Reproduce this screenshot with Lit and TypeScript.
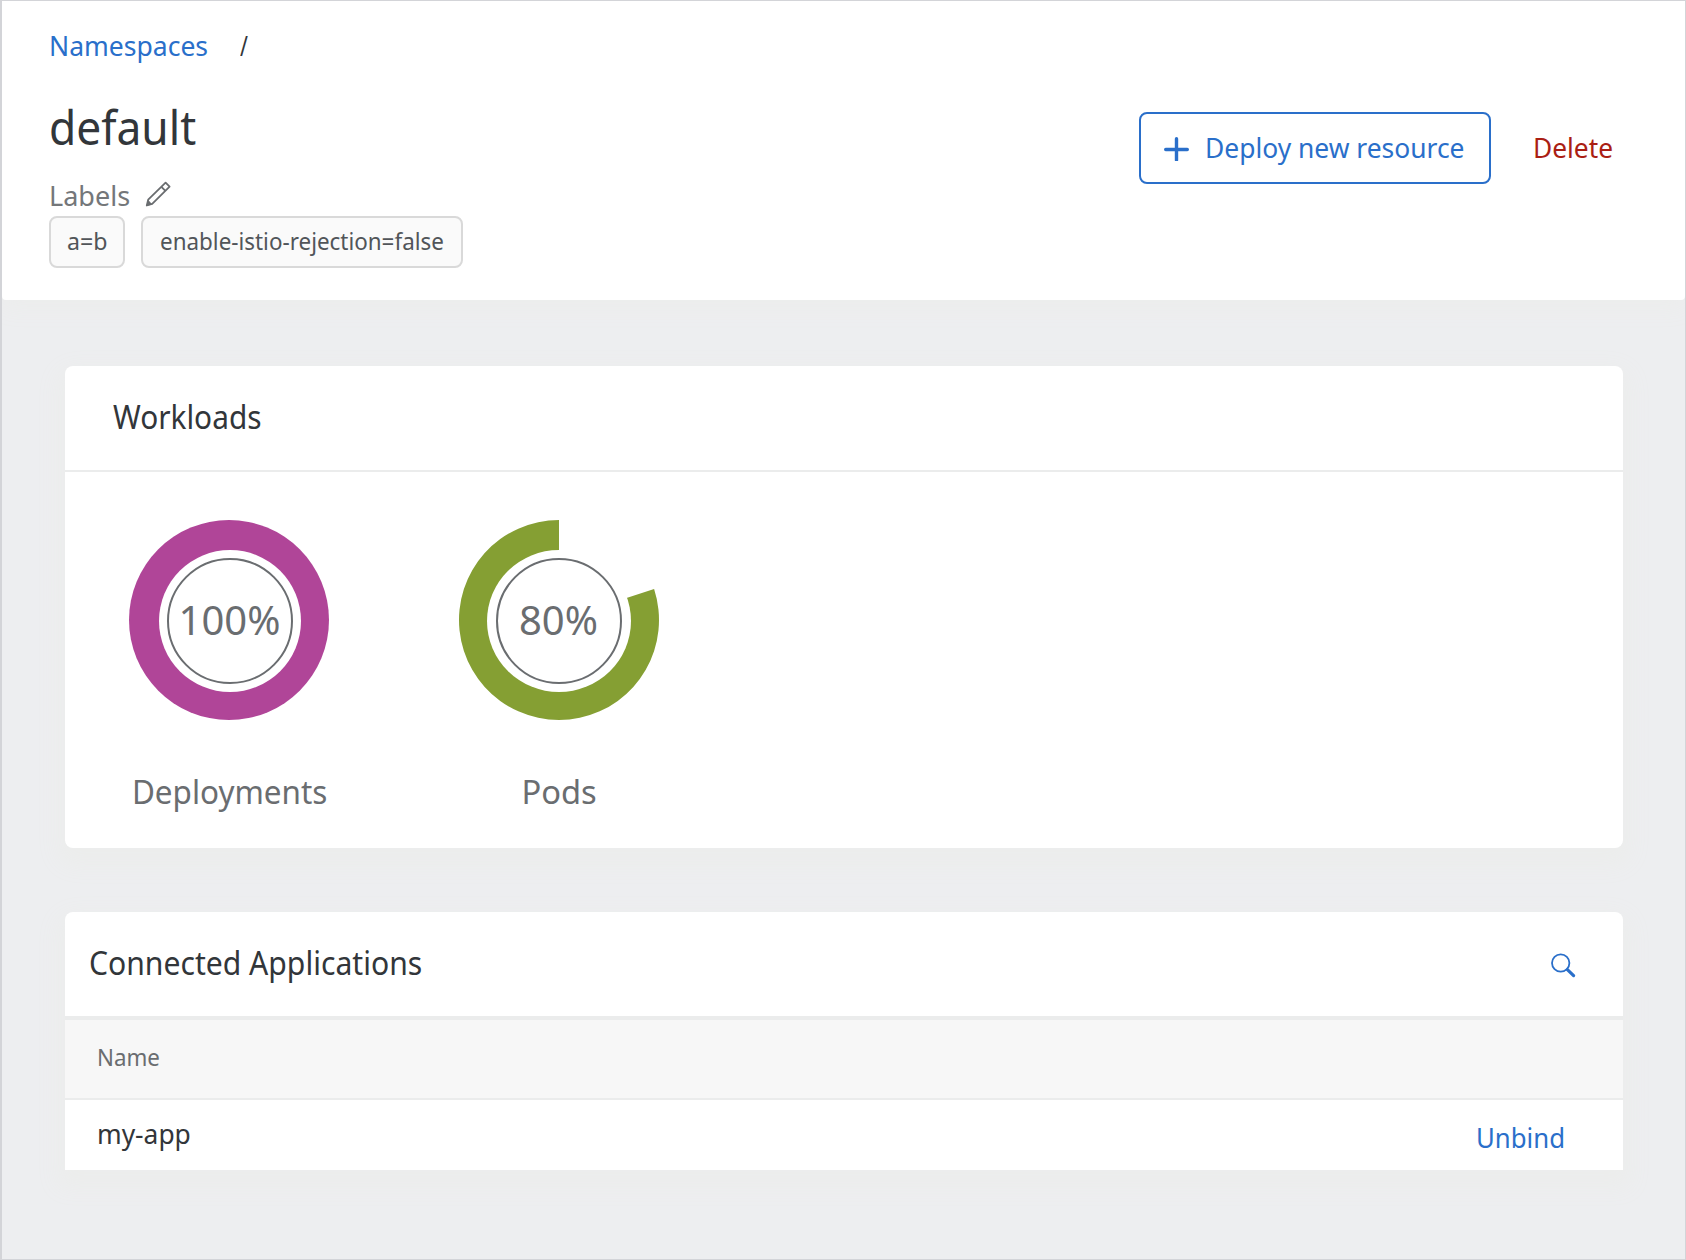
import { LitElement, html, css, svg } from "lit";
import { customElement, property } from "lit/decorators.js";

@customElement("workload-ring")
export class WorkloadRing extends LitElement {
  @property({ type: Number }) percent = 100;
  @property() color = "#b04598";
  @property({ type: Number }) shift = 0;
  @property({ type: Number }) inner = 71;

  static styles = css`
    :host { display: block; width: 200px; height: 200px; }
    svg { display: block; overflow: visible; }
    .value { font: 40px "Noto Sans", sans-serif; fill: #6a6d70; }
  `;

  private sector() {
    if (this.percent >= 100) return svg`<circle cx="100" cy="100" r="100" fill=${this.color} />`;
    const a = (1 - this.percent / 100) * 2 * Math.PI;
    const x = 100 + 100 * Math.sin(a);
    const y = 100 - 100 * Math.cos(a);
    return svg`<path d="M100 100L${x} ${y}A100 100 0 ${this.percent > 50 ? 1 : 0} 1 100 0Z" fill=${this.color} />`;
  }

  render() {
    const cx = 100 + this.shift;
    return html`<svg width="200" height="200" viewBox="0 0 200 200">
      ${this.sector()}
      <ellipse cx=${cx} cy="101" rx=${this.inner} ry="71" fill="#fff" />
      <circle cx=${cx} cy="101" r="62" fill="none" stroke="#6a6d70" stroke-width="2" />
      <text class="value" x=${cx - 0.5} y="115" text-anchor="middle">${this.percent}%</text>
    </svg>`;
  }
}

@customElement("app-root")
export class AppRoot extends LitElement {
  static styles = css`
    :host { display: block; }
    * { box-sizing: border-box; }
    .page {
      width: 1686px; height: 1260px; background: #edeef0; overflow: hidden;
      border: 1px solid #d3d4d8; border-left-width: 2px;
      font: 28px/36px "Noto Sans", sans-serif; color: #32363a; white-space: nowrap;
      display: flex; flex-direction: column;
    }
    .t { display: block; transform-origin: 0 50%; }
    .header {
      height: 299px; background: #fff; border-radius: 0 0 4px 4px; flex: none;
      padding: 24px 70px 0 47px; display: flex; justify-content: space-between;
      box-shadow: 0 4px 24px 4px #ecedec;
    }
    .crumbs { display: flex; line-height: 40px; }
    .crumb { color: #2a6fca; transform: scaleX(0.947); width: 191px; }
    .slash { transform: scaleX(0.76); }
    .title { font-size: 47px; font-weight: 400; line-height: 60px; margin: 32px 0 20px; transform: scaleX(0.943); }
    .labels { display: flex; color: #74777a; }
    .labels-name { transform: scaleX(0.965); width: 96px; }
    .pencil { margin-top: 4px; }
    .chips { display: flex; gap: 16px; margin-top: 3px; }
    .chip {
      height: 52px; border: 2px solid #d9d9d9; border-radius: 8px; background: #fafafa;
      font-size: 24px; line-height: 46px; color: #515559; padding-left: 16px;
    }
    .short { width: 76px; }
    .short .t { transform: scaleX(0.965); }
    .long { width: 322px; padding-left: 17px; }
    .long .t { transform: scaleX(0.934); }
    .actions { display: flex; align-items: center; height: 72px; margin-top: 87px; }
    .deploy {
      width: 352px; height: 72px; border: 2px solid #2a6fca; border-radius: 8px; color: #2a6fca;
      display: flex; align-items: center; padding: 0 0 0 23px;
    }
    .deploy .t { margin: -2px 0 0 16px; transform: scaleX(0.943); }
    .delete { color: #aa1e14; margin: -2px 0 0 41.5px; width: 82.5px; transform: scaleX(0.94); }
    .body { padding: 66px 62px 0 63px; display: flex; flex-direction: column; gap: 64px; }
    .card { background: #fff; border-radius: 8px; box-shadow: 0 10px 22px 8px #ecedec; }
    .square { border-radius: 8px 8px 0 0; }
    .bar { height: 106px; border-bottom: 2px solid #ebecec; padding: 27px 0 0 48px; font-size: 32px; line-height: 48px; }
    .bar .t { transform: scaleX(0.932); }
    .rings { height: 376px; padding: 48px 0 0 64px; display: flex; gap: 130px; }
    .workload { width: 200px; display: flex; flex-direction: column; align-items: center; gap: 48px; }
    .caption { font-size: 33px; line-height: 48px; color: #6a6d70; transform: translateX(1px) scaleX(0.952); }
    .caption.pods { transform: scaleX(0.99); }
    .bar.apps { height: 108px; border-bottom-width: 4px; padding: 27px 44px 0 24px; display: flex; justify-content: space-between; }
    .bar.apps .t { transform: scaleX(0.941); }
    .search { margin-top: 12px; }
    .thead { height: 80px; background: #f7f7f7; border-bottom: 2px solid #ebecec; padding: 19px 0 0 32px; font-size: 24px; color: #6a6d70; }
    .thead .t { transform: scaleX(0.93); }
    .row { height: 70px; padding: 15px 54px 0 32px; display: flex; justify-content: space-between; }
    .app { transform: scaleX(0.942); }
    .unbind { color: #2a6fca; margin-top: 4px; width: 93px; transform: scaleX(0.92); }
  `;

  render() {
    return html`<div class="page">
      <header class="header">
        <div>
          <nav class="crumbs"><a class="t crumb">Namespaces</a><span class="t slash">/</span></nav>
          <h1 class="t title">default</h1>
          <div class="labels">
            <span class="t labels-name">Labels</span>
            <svg class="pencil" width="26" height="26" viewBox="0 0 26 26" fill="none" stroke="#6a6d70" stroke-width="1.8" stroke-linejoin="round">
              <path d="M1.8 24.4L3.2 18.6L20.6 1.6L24.6 5.6L7.2 22.8Z" />
              <path d="M16.4 5.8L20.4 9.8" />
              <path d="M1.2 25.2L3 18.8L7.2 23.2Z" fill="#6a6d70" stroke="none" />
            </svg>
          </div>
          <div class="chips">
            <div class="chip short"><span class="t">a=b</span></div>
            <div class="chip long"><span class="t">enable-istio-rejection=false</span></div>
          </div>
        </div>
        <div class="actions">
          <div class="deploy">
            <svg width="25" height="26" viewBox="0 0 25 26" stroke="#2a6fca" stroke-width="3.4" stroke-linecap="round">
              <path d="M12.5 3.7V25.1M1.7 14.5H23.3" />
            </svg>
            <span class="t">Deploy new resource</span>
          </div>
          <span class="t delete">Delete</span>
        </div>
      </header>
      <main class="body">
        <section class="card">
          <div class="bar"><span class="t">Workloads</span></div>
          <div class="rings">
            <div class="workload">
              <workload-ring percent="100" color="#b04598" shift="1"></workload-ring>
              <span class="caption">Deployments</span>
            </div>
            <div class="workload">
              <workload-ring percent="80" color="#859f33" inner="72"></workload-ring>
              <span class="caption pods">Pods</span>
            </div>
          </div>
        </section>
        <section class="card square">
          <div class="bar apps">
            <span class="t">Connected Applications</span>
            <svg class="search" width="30" height="30" viewBox="0 0 30 30" fill="none" stroke="#2a6fca">
              <circle cx="11.7" cy="12" r="8.7" stroke-width="1.8" />
              <path d="M18.4 18.6L24.6 24.6" stroke-width="3.2" stroke-linecap="round" />
            </svg>
          </div>
          <div class="thead"><span class="t">Name</span></div>
          <div class="row"><span class="t app">my-app</span><a class="t unbind">Unbind</a></div>
        </section>
      </main>
    </div>`;
  }
}
